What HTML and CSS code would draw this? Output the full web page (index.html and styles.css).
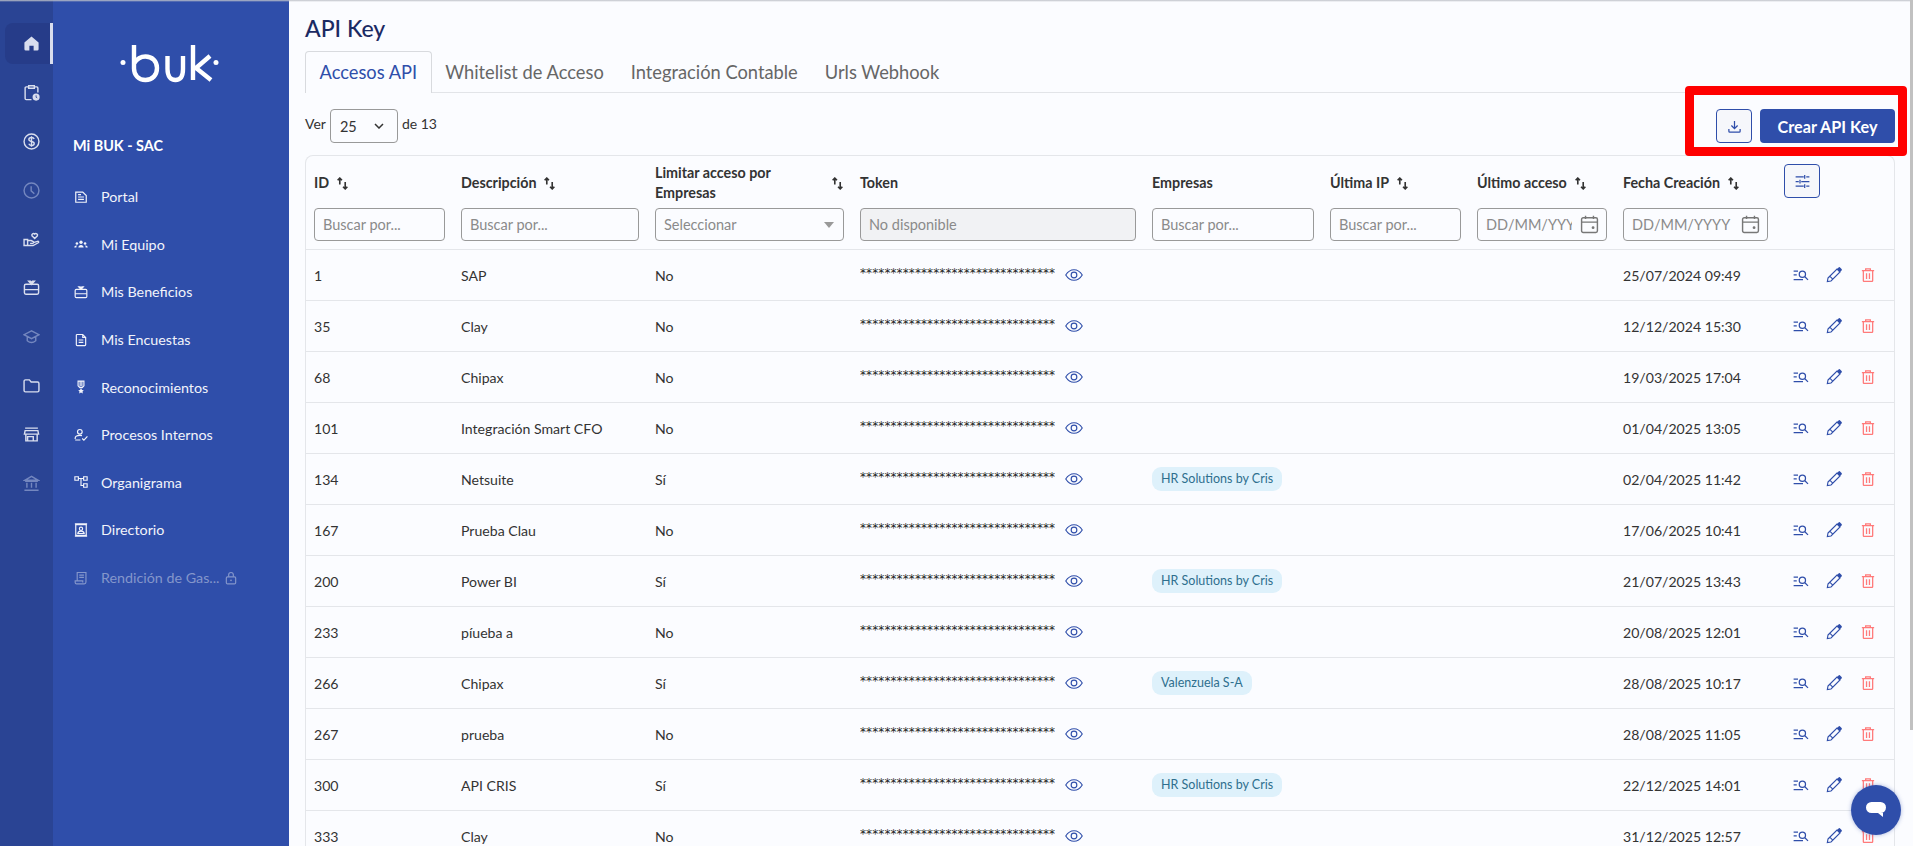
FILE: index.html
```html
<!DOCTYPE html>
<html lang="es">
<head>
    <meta charset="UTF-8">
    <title>API Key</title>
    <link rel="stylesheet" href="styles.css">
</head>
<body>
    <svg class="sprites" width="0" height="0">
        <symbol id="i-home" viewBox="0 0 24 24"><path fill="currentColor" stroke="none" d="M12 2 2 10.600V20a2 2 0 0 0 2 2h5v-7h6v7h5a2 2 0 0 0 2-2v-9.400z"/></symbol>
        <symbol id="i-tasks" viewBox="0 0 24 24"><path d="M7.500 4H4.500A1.500 1.500 0 0 0 3 5.500v15A1.500 1.500 0 0 0 4.500 22H12M16.500 4h3A1.500 1.500 0 0 1 21 5.500V12M8 2.500h8V6H8z"/><circle cx="18.500" cy="18.500" r="5" fill="currentColor" stroke="none"/><path stroke="#2a4494" stroke-width="1.200" d="M18.500 16v2.700l1.600 1"/></symbol>
        <symbol id="i-dollar" viewBox="0 0 24 24"><circle cx="12" cy="12" r="10.500"/><path d="M15.800 8.600c-.6-1.500-2-2.200-3.800-2.200-2.100 0-3.700 1-3.700 2.800 0 3.800 7.500 1.800 7.500 5.600 0 1.800-1.700 2.800-3.800 2.800-1.800 0-3.200-.8-3.800-2.300M12 4.500v15"/></symbol>
        <symbol id="i-clock" viewBox="0 0 24 24"><circle cx="12" cy="12" r="10.500"/><path d="M11.500 6v6.500l4.500 4"/></symbol>
        <symbol id="i-care" viewBox="0 0 24 24"><path d="M16.500 10.500l-3.800-3.600a2.300 2.300 0 0 1 3.800-2.500 2.300 2.300 0 0 1 3.800 2.500zM1.500 12h5v8.500h-5zM6.500 13.500h5l3 1.600c1.200.8.500 2.400-1 2.400H10M14.500 16.500l6-1.900c1.600-.4 2.300 1.100 1 2l-7.300 3.900H6.500"/></symbol>
        <symbol id="i-gift" viewBox="0 0 24 24"><rect x="2" y="7.500" width="20" height="14" rx="2"/><path d="M2 15h20M12 7.500 8 3h2.500L12 5l1.500-2H16z"/></symbol>
        <symbol id="i-cap" viewBox="0 0 24 24"><path d="M12 4 1.500 9.500 12 15l10.500-5.500zM6 12.500V18c3.500 2.800 8.500 2.800 12 0v-5.500"/></symbol>
        <symbol id="i-folder" viewBox="0 0 24 24"><path d="M1.500 6a2 2 0 0 1 2-2h5.500l2.500 3h9a2 2 0 0 1 2 2v10a2 2 0 0 1-2 2h-17a2 2 0 0 1-2-2z"/></symbol>
        <symbol id="i-store" viewBox="0 0 24 24"><path d="M3 3h18M3 6.500h18l1 5H2zM4 11.500V21h16v-9.500M6.500 21v-6h8v6"/></symbol>
        <symbol id="i-bank" viewBox="0 0 24 24"><path d="M12 2 2.500 7.500h19zM5.500 11v7M12 11v7M18.500 11v7M2 21.500h20M3 8.800h18"/></symbol>
        <symbol id="i-doc" viewBox="0 0 24 24"><path d="M3 3.500h12l6 6V21H3zM7 12h10M7 16h10M7 8h5"/></symbol>
        <symbol id="i-team" viewBox="0 0 24 24"><g fill="currentColor" stroke="none"><circle cx="12" cy="9" r="2.800"/><circle cx="5" cy="11" r="2.200"/><circle cx="19" cy="11" r="2.200"/><path d="M7.500 18c0-3 2-4.500 4.500-4.500s4.500 1.500 4.500 4.500zM.5 18c0-2.500 1.800-3.800 4.500-3.500-.8 1-1 2.200-1 3.500zM23.500 18c0-2.500-1.800-3.800-4.500-3.500.8 1 1 2.200 1 3.500z"/></g></symbol>
        <symbol id="i-survey" viewBox="0 0 24 24"><path d="M5 2.500h10l5 5V20a1.500 1.500 0 0 1-1.500 1.500h-13A1.500 1.500 0 0 1 4 20V3.500zM8 12h8M8 16h8M15 2.500v5h5"/></symbol>
        <symbol id="i-medal" viewBox="0 0 24 24"><path d="M7 2h10v8l-3 3h-4l-3-3zM10.500 2v9M13.500 2v9"/><path fill="currentColor" stroke="none" d="m12 14 1.800 3.200 3 .5-2.200 2.200.5 3.100-3.100-1.500-3.100 1.500.5-3.100-2.200-2.200 3-.5z"/></symbol>
        <symbol id="i-process" viewBox="0 0 24 24"><circle cx="10" cy="6.500" r="4"/><path d="M2 19v-1.500c0-3 3-5 8-5 1.500 0 2.700.2 3.700.5M2 20.500h9M14 18l3 3 6-6.500"/></symbol>
        <symbol id="i-org" viewBox="0 0 24 24"><path d="M1.500 3h6v6h-6zM16.500 3h6v6h-6zM16.500 15h6v6h-6zM7.500 6h9M12 6v12h4.500"/></symbol>
        <symbol id="i-contact" viewBox="0 0 24 24"><path d="M3 3h18v18H3zM1.500 1.500h21M1.500 22.500h21"/><circle cx="12" cy="10" r="2.800"/><path d="M6.500 18c.5-3 3-4 5.500-4s5 1 5.500 4z"/></symbol>
        <symbol id="i-receipt" viewBox="0 0 24 24"><path d="M5.500 17V2.500h15V19a3 3 0 0 1-3 3H4.500A2.500 2.500 0 0 1 2 19.500V17h13v2.500M9 7h8M9 11h8"/></symbol>
        <symbol id="i-lock" viewBox="0 0 24 24"><rect x="4" y="10" width="16" height="12" rx="2"/><path d="M8 10V6.500a4 4 0 0 1 8 0V10"/><circle cx="12" cy="16" r="1.500" fill="currentColor" stroke="none"/></symbol>
        <symbol id="i-sort" viewBox="0 0 12 12"><path d="M3.500 7V1M1.500 3l2-2 2 2M8.500 4.500v6.500M6.500 9l2 2 2-2"/></symbol>
        <symbol id="i-eye" viewBox="0 0 24 24"><path d="M1 12c3-4.800 6.800-7 11-7s8 2.200 11 7c-3 4.800-6.800 7-11 7s-8-2.200-11-7z"/><circle cx="12" cy="12" r="3.800"/></symbol>
        <symbol id="i-find" viewBox="0 0 24 24"><circle cx="15" cy="10" r="5"/><path d="m19 14 5 5M1 5h7M1 11h5M1 18.500h15"/></symbol>
        <symbol id="i-pencil" viewBox="0 0 24 24"><path d="M3 16.500 16.500 3l4.500 4.500L7.500 21 2 22zM6 14l4.500 4.500"/><path fill="currentColor" stroke="none" d="M16.500 3 18.500 1a2 2 0 0 1 3 0l1.500 1.500a2 2 0 0 1 0 3L21 7.500z"/></symbol>
        <symbol id="i-trash" viewBox="0 0 24 24"><path d="M1.500 4.500h21M8 4.500V1.500h8v3M4 4.500V22a1 1 0 0 0 1 1h14a1 1 0 0 0 1-1V4.500M9.500 9v10M14.500 9v10"/></symbol>
        <symbol id="i-calendar" viewBox="0 0 24 24"><rect x="2" y="3.500" width="20" height="18.500" rx="2"/><path d="M2 9h20M7 1v4M17 1v4"/><circle cx="16.500" cy="16" r="1.800" fill="currentColor" stroke="none"/></symbol>
        <symbol id="i-download" viewBox="0 0 24 24"><path d="M12 3v12M7 10.500l5 5 5-5M3 16v3.500A1.500 1.500 0 0 0 4.500 21h15a1.500 1.500 0 0 0 1.500-1.500V16"/></symbol>
        <symbol id="i-tune" viewBox="0 0 24 24"><path d="M1 4.500h13M18 4.500h5M15.500 1.500v6M1 12h5M10 12h13M8 9v6M1 19.500h13M18 19.500h5M15.500 16.500v6"/></symbol>
    </svg>

    <div class="app">
        <nav class="rail">
            <a class="rail-item active"><svg class="icon"><use href="#i-home"/></svg></a>
            <a class="rail-item"><svg class="icon"><use href="#i-tasks"/></svg></a>
            <a class="rail-item"><svg class="icon"><use href="#i-dollar"/></svg></a>
            <a class="rail-item dim"><svg class="icon"><use href="#i-clock"/></svg></a>
            <a class="rail-item"><svg class="icon"><use href="#i-care"/></svg></a>
            <a class="rail-item"><svg class="icon"><use href="#i-gift"/></svg></a>
            <a class="rail-item dim"><svg class="icon"><use href="#i-cap"/></svg></a>
            <a class="rail-item"><svg class="icon"><use href="#i-folder"/></svg></a>
            <a class="rail-item"><svg class="icon"><use href="#i-store"/></svg></a>
            <a class="rail-item dim"><svg class="icon"><use href="#i-bank"/></svg></a>
        </nav>

        <aside class="sidebar">
            <svg class="logo" width="100" height="40" viewBox="0 0 100 40" aria-label="buk">
                <circle cx="3" cy="18.500" r="2.500" fill="#fff"/>
                <circle cx="96" cy="18.500" r="2.500" fill="#fff"/>
                <path d="M14 1v23.500c0 6.500 4.500 11.500 11.500 11.500S37 31 37 24 32 12.500 25.500 12.500c-5 0-9 3-11.500 7M47.500 12v13c0 7 3 11 8 11s7.500-4 7.500-11V12M73 1v35M90 12 76 24l15 12" fill="none" stroke="#fff" stroke-width="4.400"/>
            </svg>
            <div class="company">Mi BUK - SAC</div>
            <ul class="menu">
                <li><svg class="icon"><use href="#i-doc"/></svg>Portal</li>
                <li><svg class="icon"><use href="#i-team"/></svg>Mi Equipo</li>
                <li><svg class="icon"><use href="#i-gift"/></svg>Mis Beneficios</li>
                <li><svg class="icon"><use href="#i-survey"/></svg>Mis Encuestas</li>
                <li><svg class="icon"><use href="#i-medal"/></svg>Reconocimientos</li>
                <li><svg class="icon"><use href="#i-process"/></svg>Procesos Internos</li>
                <li><svg class="icon"><use href="#i-org"/></svg>Organigrama</li>
                <li><svg class="icon"><use href="#i-contact"/></svg>Directorio</li>
                <li class="locked"><svg class="icon"><use href="#i-receipt"/></svg>Rendición de Gas...<svg class="icon lock"><use href="#i-lock"/></svg></li>
            </ul>
        </aside>

        <main class="content">
            <h1>API Key</h1>
            <div class="tabs">
                <a class="tab active">Accesos API</a>
                <a class="tab">Whitelist de Acceso</a>
                <a class="tab">Integración Contable</a>
                <a class="tab">Urls Webhook</a>
            </div>

            <div class="toolbar">
                <div class="pager">
                    Ver
                    <div class="page-size">25<svg width="10" height="6" viewBox="0 0 10 6"><path d="m1 1 4 4 4-4" fill="none" stroke="#333" stroke-width="1.500"/></svg></div>
                    de 13
                </div>
                <div class="actions">
                    <button class="btn-icon"><svg class="icon"><use href="#i-download"/></svg></button>
                    <button class="btn-primary">Crear API Key</button>
                </div>
            </div>

            <div class="card">
                <table>
                    <colgroup>
                        <col class="c-id"><col class="c-desc"><col class="c-limit"><col class="c-token"><col class="c-emp"><col class="c-ip"><col class="c-last"><col class="c-date"><col>
                    </colgroup>
                    <thead>
                        <tr class="titles">
                            <th><span class="th">ID <svg class="sort"><use href="#i-sort"/></svg></span></th>
                            <th><span class="th">Descripción <svg class="sort"><use href="#i-sort"/></svg></span></th>
                            <th><span class="th spread"><span>Limitar acceso por Empresas</span><svg class="sort"><use href="#i-sort"/></svg></span></th>
                            <th>Token</th>
                            <th>Empresas</th>
                            <th><span class="th">Última IP <svg class="sort"><use href="#i-sort"/></svg></span></th>
                            <th><span class="th">Último acceso <svg class="sort"><use href="#i-sort"/></svg></span></th>
                            <th><span class="th">Fecha Creación <svg class="sort"><use href="#i-sort"/></svg></span></th>
                            <th><button class="btn-icon"><svg class="icon"><use href="#i-tune"/></svg></button></th>
                        </tr>
                        <tr class="filters">
                            <th><input placeholder="Buscar por..."></th>
                            <th><input placeholder="Buscar por..."></th>
                            <th><div class="fake-select">Seleccionar<i class="caret"></i></div></th>
                            <th><input placeholder="No disponible" disabled></th>
                            <th><input placeholder="Buscar por..."></th>
                            <th><input placeholder="Buscar por..."></th>
                            <th><div class="date-field"><input placeholder="DD/MM/YYYY"><svg class="icon"><use href="#i-calendar"/></svg></div></th>
                            <th><div class="date-field"><input placeholder="DD/MM/YYYY"><svg class="icon"><use href="#i-calendar"/></svg></div></th>
                            <th></th>
                        </tr>
                    </thead>
                    <tbody>
                        <tr><td>1</td><td>SAP</td><td>No</td><td><span class="token"><span>********************************</span><svg class="eye"><use href="#i-eye"/></svg></span></td><td></td><td></td><td></td><td>25/07/2024 09:49</td><td><span class="row-actions"><svg class="find"><use href="#i-find"/></svg><svg class="pencil"><use href="#i-pencil"/></svg><svg class="trash"><use href="#i-trash"/></svg></span></td></tr>
                        <tr><td>35</td><td>Clay</td><td>No</td><td><span class="token"><span>********************************</span><svg class="eye"><use href="#i-eye"/></svg></span></td><td></td><td></td><td></td><td>12/12/2024 15:30</td><td><span class="row-actions"><svg class="find"><use href="#i-find"/></svg><svg class="pencil"><use href="#i-pencil"/></svg><svg class="trash"><use href="#i-trash"/></svg></span></td></tr>
                        <tr><td>68</td><td>Chipax</td><td>No</td><td><span class="token"><span>********************************</span><svg class="eye"><use href="#i-eye"/></svg></span></td><td></td><td></td><td></td><td>19/03/2025 17:04</td><td><span class="row-actions"><svg class="find"><use href="#i-find"/></svg><svg class="pencil"><use href="#i-pencil"/></svg><svg class="trash"><use href="#i-trash"/></svg></span></td></tr>
                        <tr><td>101</td><td>Integración Smart CFO</td><td>No</td><td><span class="token"><span>********************************</span><svg class="eye"><use href="#i-eye"/></svg></span></td><td></td><td></td><td></td><td>01/04/2025 13:05</td><td><span class="row-actions"><svg class="find"><use href="#i-find"/></svg><svg class="pencil"><use href="#i-pencil"/></svg><svg class="trash"><use href="#i-trash"/></svg></span></td></tr>
                        <tr><td>134</td><td>Netsuite</td><td>Sí</td><td><span class="token"><span>********************************</span><svg class="eye"><use href="#i-eye"/></svg></span></td><td><span class="chip">HR Solutions by Cris</span></td><td></td><td></td><td>02/04/2025 11:42</td><td><span class="row-actions"><svg class="find"><use href="#i-find"/></svg><svg class="pencil"><use href="#i-pencil"/></svg><svg class="trash"><use href="#i-trash"/></svg></span></td></tr>
                        <tr><td>167</td><td>Prueba Clau</td><td>No</td><td><span class="token"><span>********************************</span><svg class="eye"><use href="#i-eye"/></svg></span></td><td></td><td></td><td></td><td>17/06/2025 10:41</td><td><span class="row-actions"><svg class="find"><use href="#i-find"/></svg><svg class="pencil"><use href="#i-pencil"/></svg><svg class="trash"><use href="#i-trash"/></svg></span></td></tr>
                        <tr><td>200</td><td>Power BI</td><td>Sí</td><td><span class="token"><span>********************************</span><svg class="eye"><use href="#i-eye"/></svg></span></td><td><span class="chip">HR Solutions by Cris</span></td><td></td><td></td><td>21/07/2025 13:43</td><td><span class="row-actions"><svg class="find"><use href="#i-find"/></svg><svg class="pencil"><use href="#i-pencil"/></svg><svg class="trash"><use href="#i-trash"/></svg></span></td></tr>
                        <tr><td>233</td><td>píueba a</td><td>No</td><td><span class="token"><span>********************************</span><svg class="eye"><use href="#i-eye"/></svg></span></td><td></td><td></td><td></td><td>20/08/2025 12:01</td><td><span class="row-actions"><svg class="find"><use href="#i-find"/></svg><svg class="pencil"><use href="#i-pencil"/></svg><svg class="trash"><use href="#i-trash"/></svg></span></td></tr>
                        <tr><td>266</td><td>Chipax</td><td>Sí</td><td><span class="token"><span>********************************</span><svg class="eye"><use href="#i-eye"/></svg></span></td><td><span class="chip">Valenzuela S-A</span></td><td></td><td></td><td>28/08/2025 10:17</td><td><span class="row-actions"><svg class="find"><use href="#i-find"/></svg><svg class="pencil"><use href="#i-pencil"/></svg><svg class="trash"><use href="#i-trash"/></svg></span></td></tr>
                        <tr><td>267</td><td>prueba</td><td>No</td><td><span class="token"><span>********************************</span><svg class="eye"><use href="#i-eye"/></svg></span></td><td></td><td></td><td></td><td>28/08/2025 11:05</td><td><span class="row-actions"><svg class="find"><use href="#i-find"/></svg><svg class="pencil"><use href="#i-pencil"/></svg><svg class="trash"><use href="#i-trash"/></svg></span></td></tr>
                        <tr><td>300</td><td>API CRIS</td><td>Sí</td><td><span class="token"><span>********************************</span><svg class="eye"><use href="#i-eye"/></svg></span></td><td><span class="chip">HR Solutions by Cris</span></td><td></td><td></td><td>22/12/2025 14:01</td><td><span class="row-actions"><svg class="find"><use href="#i-find"/></svg><svg class="pencil"><use href="#i-pencil"/></svg><svg class="trash"><use href="#i-trash"/></svg></span></td></tr>
                        <tr><td>333</td><td>Clay</td><td>No</td><td><span class="token"><span>********************************</span><svg class="eye"><use href="#i-eye"/></svg></span></td><td></td><td></td><td></td><td>31/12/2025 12:57</td><td><span class="row-actions"><svg class="find"><use href="#i-find"/></svg><svg class="pencil"><use href="#i-pencil"/></svg><svg class="trash"><use href="#i-trash"/></svg></span></td></tr>
                    </tbody>
                </table>
            </div>
        </main>
    </div>

    <div class="top-shadow"></div>
    <div class="highlight"></div>
    <div class="scroll-thumb"></div>
    <button class="chat"><svg width="24" height="18" viewBox="0 0 24 18"><rect x="2" y="1" width="20" height="11" rx="5.500" fill="#fff"/><path d="M14 12h5v4z" fill="#fff"/></svg></button>
</body>
</html>
```

FILE: styles.css
```css
* {
    box-sizing: border-box;
}
html, body {
    margin: 0;
    height: 100%;
    overflow: hidden;
}
body {
    font-family: "Lato", "Open Sans", sans-serif;
    font-size: 14.1px;
    color: #333;
    background: #fbfcff;
}
.sprites {
    position: absolute;
}
.icon, .sort, .eye, .find, .pencil, .trash {
    fill: none;
    stroke: currentColor;
    stroke-width: 2;
    flex: none;
}
.app {
    display: flex;
    height: 846px;
}

/* icon rail */
.rail {
    width: 53px;
    flex: none;
    background: #2a4494;
    padding-top: 23px;
    padding-left: 5px;
}
.rail-item {
    display: flex;
    align-items: center;
    justify-content: center;
    height: 41px;
    margin-bottom: 7.900px;
    padding-left: 4px;
    color: #d9deee;
}
.rail-item .icon {
    width: 17px;
    height: 17px;
}
.rail-item.dim {
    color: #7487bf;
}
.rail-item.active {
    background: #263c89;
    border-radius: 8px 0 0 8px;
    border-right: 3px solid #d9deee;
    padding-left: 7px;
}

/* sidebar */
.sidebar {
    width: 236px;
    flex: none;
    background: #2f4eaa;
    color: #fff;
    padding-top: 44px;
}
.logo {
    display: block;
    margin-left: 67px;
}
.company {
    margin: 53px 0 0 20px;
    font-weight: 700;
    font-size: 14.400px;
    line-height: 18px;
}
.menu {
    list-style: none;
    margin: 18px 0 0;
    padding: 0;
}
.menu li {
    display: flex;
    align-items: center;
    height: 47.600px;
    padding-left: 21px;
    font-size: 14.300px;
    color: #f2f4fb;
}
.menu .icon {
    width: 14px;
    height: 14px;
    margin-right: 13px;
}
.menu .locked {
    color: #8496cb;
}
.menu .lock {
    margin: 0 0 0 4px;
}

/* main */
.content {
    flex: 1;
    min-width: 0;
    padding: 0 18px 0 16px;
}
h1 {
    margin: 0;
    padding-top: 14px;
    height: 51px;
    font-size: 23px;
    line-height: 28px;
    font-weight: 500;
    color: #1b2a63;
}
.tabs {
    display: flex;
    height: 42px;
    border-bottom: 1px solid #e2e4e8;
}
.tab {
    padding: 0 12.500px;
    height: 41px;
    line-height: 40px;
    font-size: 18.300px;
    color: #666;
    border: 1px solid transparent;
    border-bottom: 0;
}
.tab.active {
    padding: 0 13.500px;
    color: #2f4eaa;
    background: #fbfcff;
    border-color: #d8dade;
    border-radius: 4px 4px 0 0;
    height: 42px;
}
.toolbar {
    display: flex;
    justify-content: space-between;
    margin-top: 16px;
    height: 34px;
}
.pager {
    display: flex;
    align-items: center;
    gap: 4px;
    font-size: 14px;
    height: 34px;
    padding-bottom: 6px;
}
.page-size {
    display: flex;
    align-items: center;
    justify-content: space-between;
    width: 68px;
    height: 34px;
    margin-bottom: -6px;
    padding: 0 13px 0 9px;
    border: 1px solid #999;
    border-radius: 4px;
    font-size: 14.500px;
}
.actions {
    display: flex;
    gap: 8px;
}
.btn-icon {
    width: 36px;
    height: 34px;
    padding: 0;
    display: flex;
    align-items: center;
    justify-content: center;
    background: #f6f7fb;
    border: 1px solid #2f4eaa;
    border-radius: 4px;
    color: #2f4eaa;
}
.btn-icon .icon {
    width: 15px;
    height: 15px;
}
.titles .btn-icon {
    margin-top: -4px;
}
.btn-primary {
    width: 135px;
    height: 34px;
    background: #2f4eaa;
    color: #fff;
    border: 0;
    border-radius: 4px;
    font: 700 16.200px "Lato", sans-serif;
}

/* table */
.card {
    margin-top: 12px;
    border: 1px solid #e4e6ea;
    border-bottom: 0;
    border-radius: 8px 8px 0 0;
}
table {
    width: 100%;
    border-collapse: collapse;
    table-layout: fixed;
}
.c-id { width: 147px; }
.c-desc { width: 194px; }
.c-limit { width: 205px; }
.c-token { width: 292px; }
.c-emp { width: 178px; }
.c-ip { width: 147px; }
.c-last { width: 146px; }
.c-date { width: 161px; }
th {
    padding: 0 8px;
    text-align: left;
    font-size: 14.300px;
    font-weight: 700;
    color: #333;
}
.titles th {
    height: 48px;
    line-height: 20px;
    padding-top: 6px;
}
.filters th {
    height: 45px;
    padding-top: 4px;
    padding-bottom: 8px;
    font-weight: 400;
}
thead tr:last-child th {
    border-bottom: 1px solid #e4e6ea;
}
.th {
    display: flex;
    align-items: center;
    gap: 7px;
}
.th.spread {
    justify-content: space-between;
}
.th.spread span {
    width: 170px;
}
.sort {
    width: 13px;
    height: 13px;
    stroke-width: 1.500;
}
input {
    display: block;
    width: 100%;
    height: 33px;
    padding: 0 8px;
    border: 1px solid #999;
    border-radius: 4px;
    background: transparent;
    font: 14.500px "Lato", sans-serif;
    color: #333;
}
input::placeholder {
    color: #8a8a8a;
    opacity: 1;
}
input:disabled {
    background: #f1f2f4;
}
.fake-select {
    display: flex;
    align-items: center;
    justify-content: space-between;
    height: 33px;
    padding: 0 8px;
    border: 1px solid #999;
    border-radius: 4px;
    font-size: 14.500px;
    color: #8a8a8a;
}
.caret {
    margin-right: 1px;
    border: 5px solid transparent;
    border-top: 6px solid #999;
    border-bottom: 0;
}
.date-field {
    display: flex;
    align-items: center;
    height: 33px;
    padding-right: 7px;
    border: 1px solid #999;
    border-radius: 4px;
    color: #777;
}
.date-field input {
    flex: 1;
    min-width: 0;
    height: 31px;
    border: 0;
}
.date-field .icon {
    width: 19px;
    height: 19px;
    stroke-width: 1.800;
}
tbody td {
    height: 51px;
    padding: 0 8px;
    border-bottom: 1px solid #e4e6ea;
    color: #333;
    white-space: nowrap;
}
.token {
    display: flex;
    align-items: center;
    gap: 10px;
}
.token span {
    width: 195px;
    overflow: hidden;
    font-family: "DejaVu Sans", sans-serif;
    font-size: 12px;
    letter-spacing: .1px;
    line-height: 14px;
    color: #222;
    margin-top: -4px;
}
.eye {
    width: 18px;
    height: 18px;
    color: #2f4eaa;
    stroke-width: 1.500;
}
.chip {
    display: inline-block;
    padding: 0 9px;
    height: 24px;
    line-height: 24px;
    border-radius: 9px;
    background: #def1fb;
    color: #2e6f8e;
    font-size: 12.500px;
}
.row-actions {
    display: flex;
    align-items: center;
    padding-left: 8px;
}
.find {
    width: 17px;
    height: 15px;
    color: #2f4eaa;
}
.pencil {
    width: 16px;
    height: 16px;
    margin-left: 17px;
    color: #2f4eaa;
    stroke-width: 1.700;
}
.trash {
    width: 14px;
    height: 16px;
    margin-left: 19px;
    color: #ff7a7a;
    stroke-width: 2.200;
}

/* things over the page */
.top-shadow {
    position: absolute;
    top: 0;
    left: 0;
    right: 0;
    height: 2px;
    background: linear-gradient(#bfc2c9, rgba(191, 194, 201, 0));
}
.highlight {
    position: absolute;
    left: 1685px;
    top: 86px;
    width: 222px;
    height: 70px;
    border: 9px solid #ff0000;
    border-radius: 4px;
}
.scroll-thumb {
    position: absolute;
    right: 0;
    top: 0;
    width: 3px;
    height: 730px;
    background: #c1c1c1;
}
.chat {
    position: absolute;
    left: 1851px;
    top: 785px;
    width: 50px;
    height: 50px;
    padding: 0;
    border: 0;
    border-radius: 50%;
    background: #2f4eaa;
    box-shadow: 0 0 4px rgba(47, 78, 170, .4);
    display: flex;
    align-items: center;
    justify-content: center;
}
```
